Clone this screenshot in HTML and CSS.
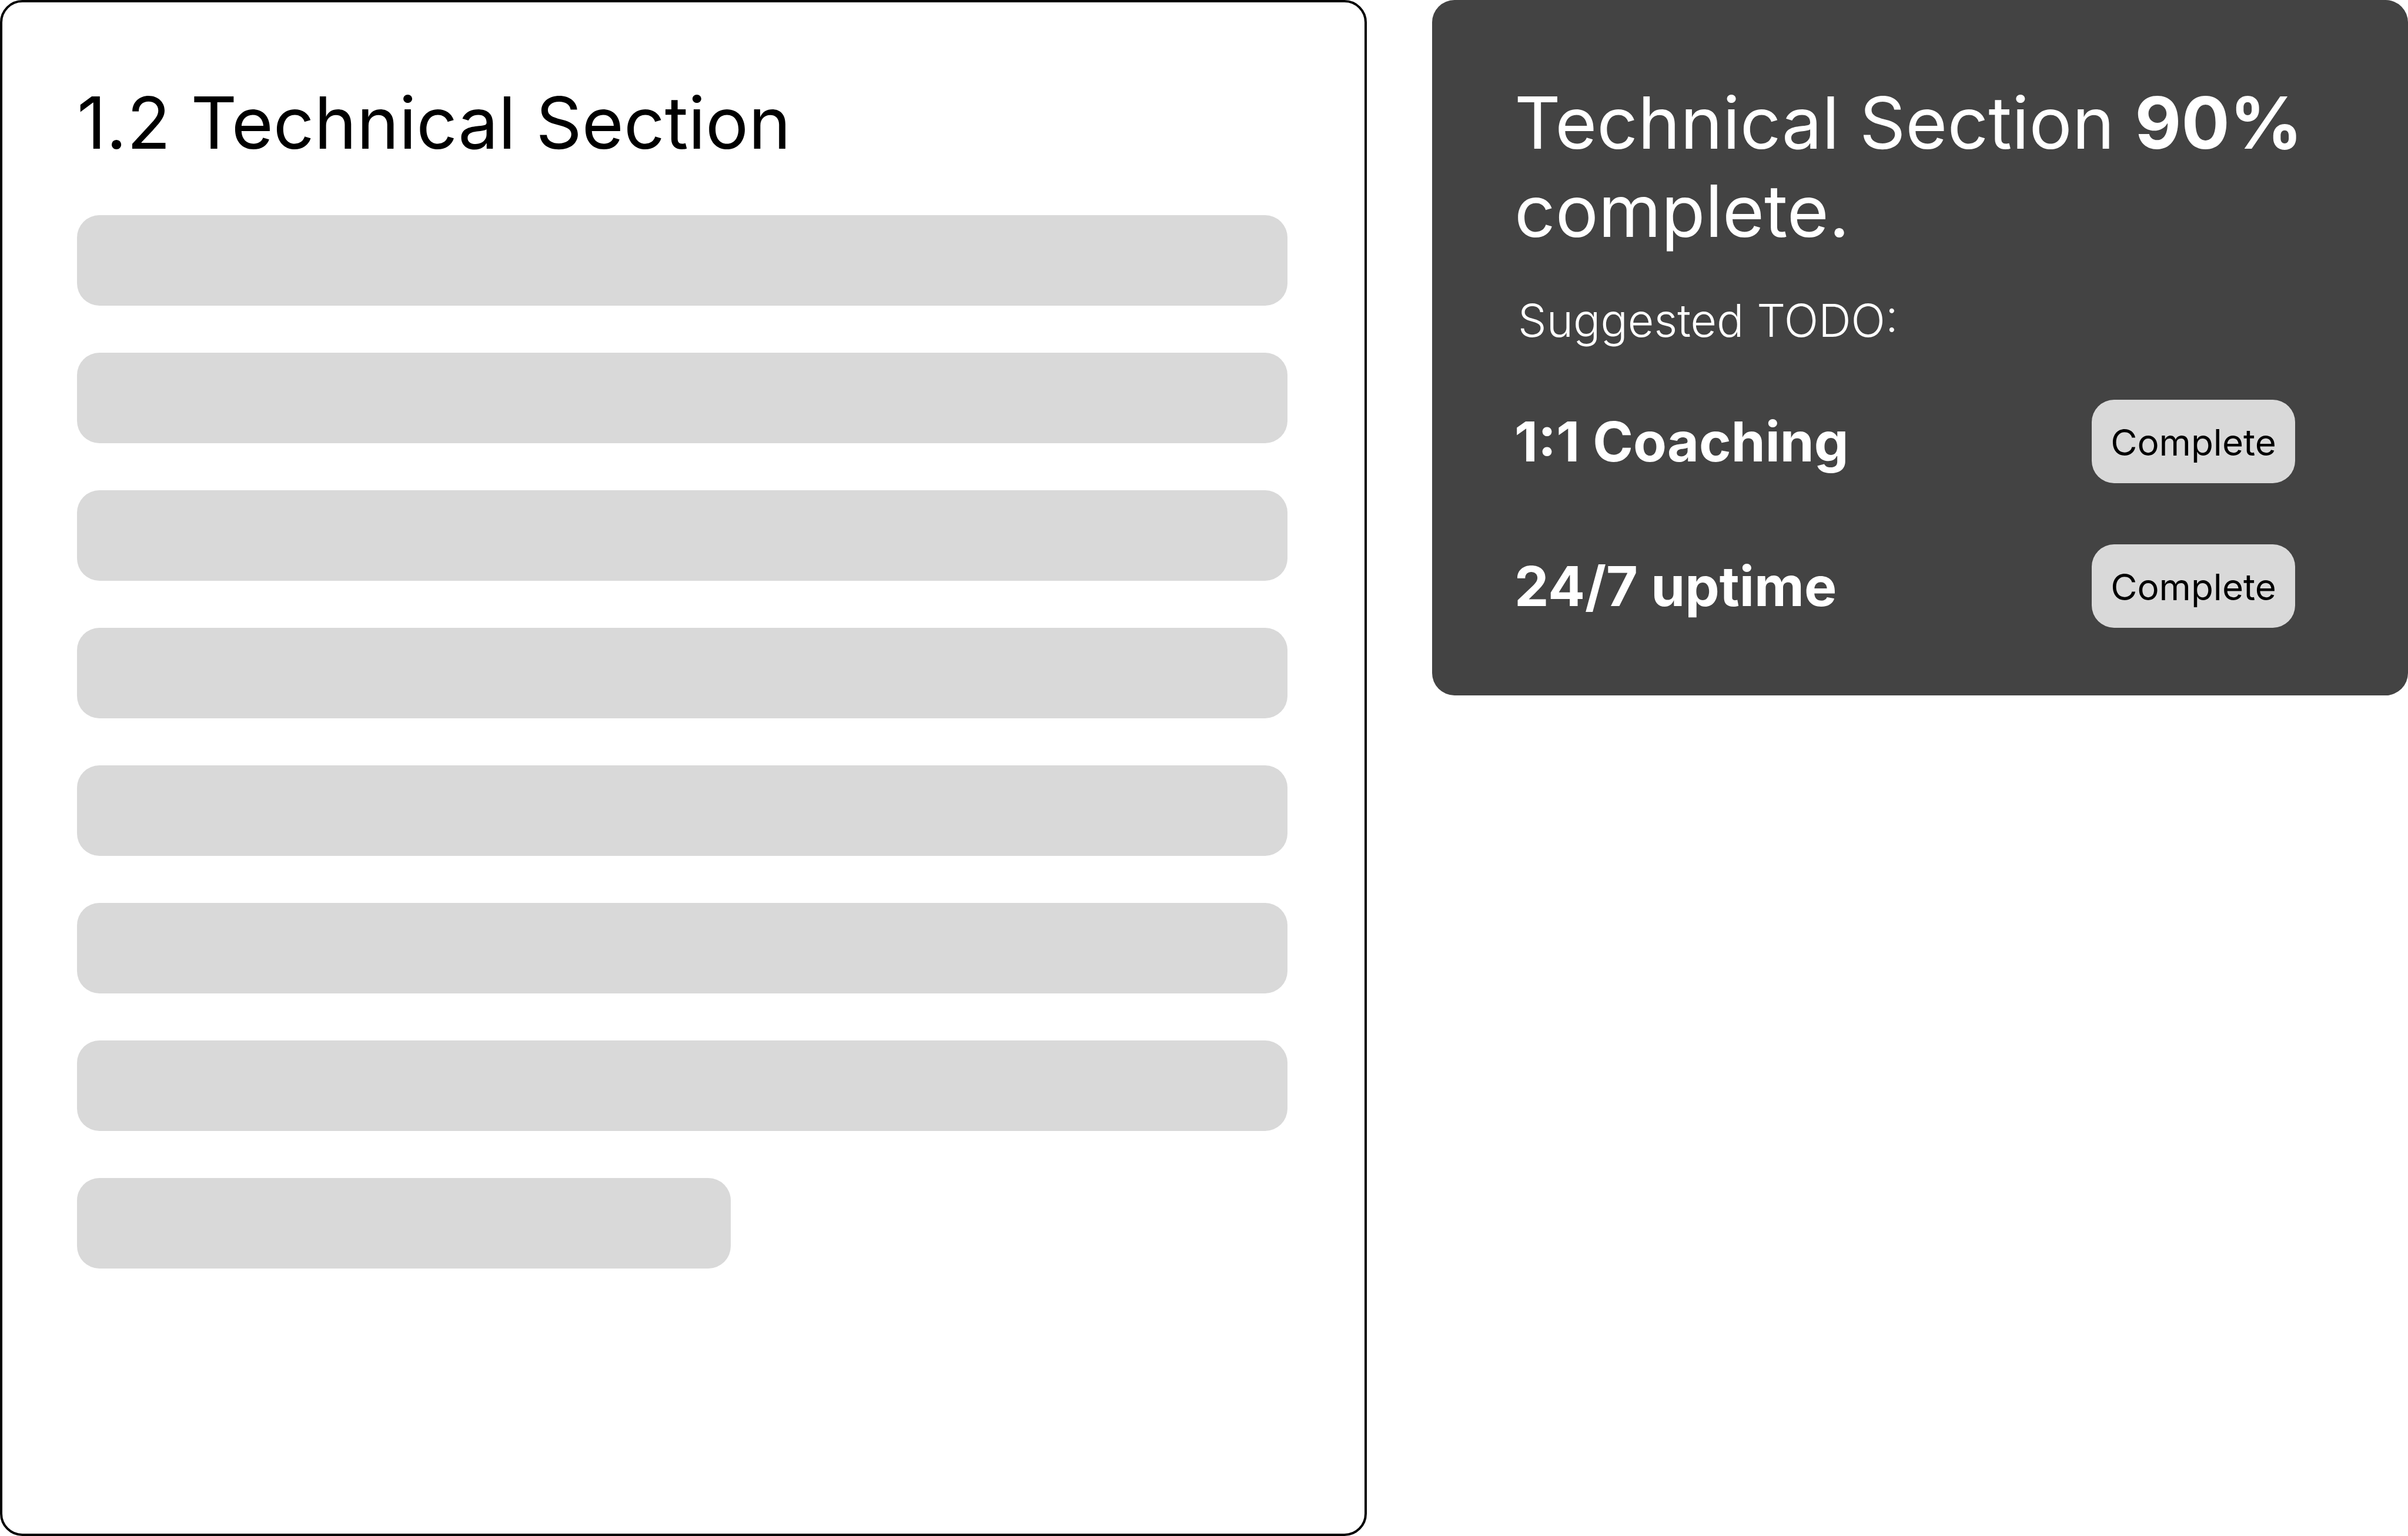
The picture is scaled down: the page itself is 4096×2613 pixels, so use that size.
FILE: index.html
```html
<!DOCTYPE html>
<html lang="en">
<head>
<meta charset="utf-8">
<title>Technical Section</title>
<link rel="stylesheet" href="styles.css">
</head>
<body>
<div class="layout">
  <main class="document">
    <h1 class="title">1.2 Technical Section</h1>
    <div class="lines">
      <div class="line"></div>
      <div class="line"></div>
      <div class="line"></div>
      <div class="line"></div>
      <div class="line"></div>
      <div class="line"></div>
      <div class="line"></div>
      <div class="line line-short"></div>
    </div>
  </main>
  <aside class="progress">
    <h2 class="title">Technical Section <strong>90%</strong> complete.</h2>
    <p class="subtitle">Suggested TODO:</p>
    <ul class="todos">
      <li class="todo"><span class="todo-name">1:1 Coaching</span><button class="complete" type="button">Complete</button></li>
      <li class="todo"><span class="todo-name">24/7 uptime</span><button class="complete" type="button">Complete</button></li>
    </ul>
  </aside>
</div>
</body>
</html>
```
FILE: styles.css
```css
* {
  box-sizing: border-box;
}

body {
  margin: 0;
  background: #fff;
  color: #000;
  font-family: Inter, "Liberation Sans", sans-serif;
}

.layout {
  display: grid;
  grid-template-columns: 2325fr 1660fr;
  gap: 111px;
  align-items: start;
  min-height: 100vh;
}

.document {
  align-self: stretch;
  padding: 130px 131px 130px 127px;
  border: 4px solid #000;
  border-radius: 38px;
}

.title {
  margin: 0;
  font-size: 122px;
  font-weight: 400;
  line-height: 150px;
}

.title strong {
  font-weight: 700;
}

.lines {
  display: grid;
  gap: 80px;
  margin-top: 82px;
}

.line {
  height: 154px;
  border-radius: 38px;
  background: #d9d9d9;
}

.line-short {
  width: 54%;
}

.progress {
  padding: 134px 140px 115px;
  border-radius: 38px;
  background: #434343;
  color: #fff;
}

.subtitle {
  margin: 64px 0 0 6px;
  font-size: 77px;
  font-weight: 300;
  line-height: 94px;
}

.todos {
  display: grid;
  gap: 104px;
  margin: 88px 52px 0 0;
  padding: 0;
  list-style: none;
}

.todo {
  display: flex;
  align-items: center;
  justify-content: space-between;
}

.todo-name {
  font-size: 93px;
  font-weight: 700;
  line-height: 112px;
}

.complete {
  width: 346px;
  height: 142px;
  padding: 4px 0 0;
  border: 0;
  border-radius: 38px;
  background: #d9d9d9;
  color: #000;
  font: 400 62px/74px Inter, "Liberation Sans", sans-serif;
}
```
